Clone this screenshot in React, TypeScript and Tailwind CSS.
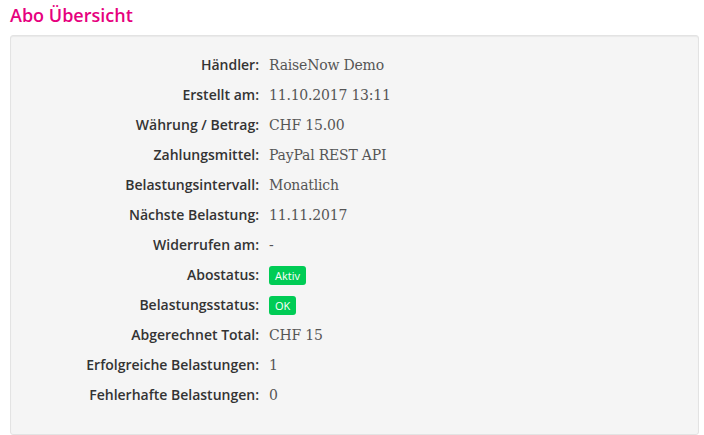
const rows: { label: string; value?: string; badge?: string }[] = [
  { label: "Händler", value: "RaiseNow Demo" },
  { label: "Erstellt am", value: "11.10.2017 13:11" },
  { label: "Währung / Betrag", value: "CHF 15.00" },
  { label: "Zahlungsmittel", value: "PayPal REST API" },
  { label: "Belastungsintervall", value: "Monatlich" },
  { label: "Nächste Belastung", value: "11.11.2017" },
  { label: "Widerrufen am", value: "-" },
  { label: "Abostatus", badge: "Aktiv" },
  { label: "Belastungsstatus", badge: "OK" },
  { label: "Abgerechnet Total", value: "CHF 15" },
  { label: "Erfolgreiche Belastungen", value: "1" },
  { label: "Fehlerhafte Belastungen", value: "0" },
];

export default function App() {
  return (
    <div className="w-[704px] h-[435px] overflow-hidden bg-white px-[10px] font-['Open_Sans',sans-serif]">
      <h1 className="pt-[2px] h-[35px] text-[18px] leading-[26px] font-semibold text-[#e6007e]">
        Abo Übersicht
      </h1>
      <div className="h-[400px] w-[689px] rounded-[3px] border border-[#e3e3e3] bg-[#f5f5f5] shadow-[inset_0_1px_1px_rgba(0,0,0,0.05)] pt-[13px]">
        {rows.map((r) => (
          <div key={r.label} className="flex items-center h-[30px]">
            <div className="w-[248px] text-right text-[14px] font-semibold text-[#333]">
              {r.label}:
            </div>
            <div className="pl-[10px]">
              {r.badge ? (
                <span className="inline-block rounded-[3px] bg-[#00cc55] px-[6px] text-[11px] leading-[19px] text-white">
                  {r.badge}
                </span>
              ) : (
                <span className="text-[14px] text-[#555] font-['DejaVu_Serif',serif] tracking-[-0.2px]">
                  {r.value}
                </span>
              )}
            </div>
          </div>
        ))}
      </div>
    </div>
  );
}
